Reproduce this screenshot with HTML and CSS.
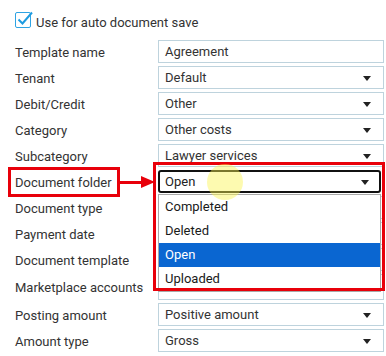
FILE: index.html
```html
<!DOCTYPE html>
<html lang="en">
<head>
  <meta charset="UTF-8">
  <title>Auto document save</title>
  <link rel="stylesheet" href="styles.css">
</head>
<body>
<div class="form">
  <label class="check">
    <span class="box">
      <svg width="20" height="20" viewBox="0 0 20 20"><path d="M4.5 10.5 L8.5 14.5 L18 3.5" fill="none" stroke="#1e9be0" stroke-width="2"/></svg>
    </span>
    <span class="check-text">Use for auto document save</span>
  </label>

  <div class="row"><span class="lbl">Template name</span><div class="field">Agreement</div></div>
  <div class="row"><span class="lbl">Tenant</span><div class="field select">Default</div></div>
  <div class="row"><span class="lbl">Debit/Credit</span><div class="field select">Other</div></div>
  <div class="row"><span class="lbl">Category</span><div class="field select">Other costs</div></div>
  <div class="row"><span class="lbl">Subcategory</span><div class="field select">Lawyer services</div></div>
  <div class="row"><span class="lbl">Document folder</span><div class="field select focused">Open</div></div>
  <div class="row"><span class="lbl">Document type</span><div class="field select"></div></div>
  <div class="row"><span class="lbl">Payment date</span><div class="field select"></div></div>
  <div class="row"><span class="lbl">Document template</span><div class="field select"></div></div>
  <div class="row tall"><span class="lbl">Marketplace accounts</span><div class="field select"></div></div>
  <div class="row"><span class="lbl">Posting amount</span><div class="field select">Positive amount</div></div>
  <div class="row"><span class="lbl">Amount type</span><div class="field select">Gross</div></div>

  <ul class="listbox">
    <li>Completed</li>
    <li>Deleted</li>
    <li class="active">Open</li>
    <li>Uploaded</li>
  </ul>

  <div class="mark mark-list"></div>
  <div class="mark mark-label"></div>
  <div class="arrow"></div>
  <div class="cursor"></div>
</div>
</body>
</html>
```

FILE: styles.css
```css
body {
  margin: 0;
  font-family: Roboto, "Liberation Sans", sans-serif;
  font-size: 13px;
  color: #333;
  background: #fff;
}
.form {
  position: relative;
  width: 386px;
  height: 356px;
  padding: 12px 2px 0 15px;
  box-sizing: border-box;
  overflow: hidden;
}
.check {
  display: flex;
  align-items: flex-start;
  gap: 5px;
  height: 16px;
  margin-bottom: 12px;
}
.check-text {
  line-height: 16px;
  padding-top: 3px;
}
.box {
  position: relative;
  width: 16px;
  height: 16px;
  border: 1.5px solid #2ea3e3;
  border-radius: 2px;
  box-sizing: border-box;
}
.box svg {
  position: absolute;
  left: -2px;
  top: -4px;
}
.row {
  display: flex;
  align-items: center;
  height: 23px;
  margin-bottom: 3px;
}
.row.tall {
  height: 26px;
  margin-bottom: 3px;
}
.lbl {
  width: 143px;
  flex: none;
  padding-top: 1px;
}
.field {
  position: relative;
  width: 226px;
  height: 23px;
  border: 1px solid #bed3dd;
  box-sizing: border-box;
  padding: 0 6px;
  line-height: 21px;
  color: #333;
}
.row.tall .field {
  height: 26px;
}
.select::after {
  content: "";
  position: absolute;
  right: 12px;
  top: 9px;
  border-left: 4.5px solid transparent;
  border-right: 4.5px solid transparent;
  border-top: 5px solid #222;
}
.focused {
  width: 223px;
  border: 2px solid #111;
  border-radius: 3px;
  padding-left: 5px;
  line-height: 19px;
  color: #222;
}
.focused::after {
  right: 10px;
  top: 8px;
}
.listbox {
  position: absolute;
  left: 158px;
  top: 194px;
  width: 223px;
  margin: 0;
  padding: 0;
  list-style: none;
  background: #fff;
  border: 1px solid #a9a9a9;
  box-sizing: border-box;
}
.listbox li {
  height: 24px;
  line-height: 24px;
  padding-left: 6px;
  color: #1a1a1a;
}
.listbox li.active {
  background: #0a66d1;
  color: #fff;
}
.mark {
  position: absolute;
  border: 3px solid #e8000a;
  box-sizing: border-box;
}
.mark-list {
  left: 153px;
  top: 162px;
  width: 232px;
  height: 129px;
}
.mark-label {
  left: 8px;
  top: 167px;
  width: 112px;
  height: 30px;
}
.arrow {
  position: absolute;
  left: 120px;
  top: 181px;
  width: 23px;
  height: 3px;
  background: #e8000a;
}
.arrow::after {
  content: "";
  position: absolute;
  left: 21px;
  top: -5px;
  border-top: 6.5px solid transparent;
  border-bottom: 6.5px solid transparent;
  border-left: 14px solid #e8000a;
}
.cursor {
  position: absolute;
  left: 207px;
  top: 164px;
  width: 36px;
  height: 36px;
  border-radius: 50%;
  background: rgba(250, 245, 80, 0.45);
}
```
